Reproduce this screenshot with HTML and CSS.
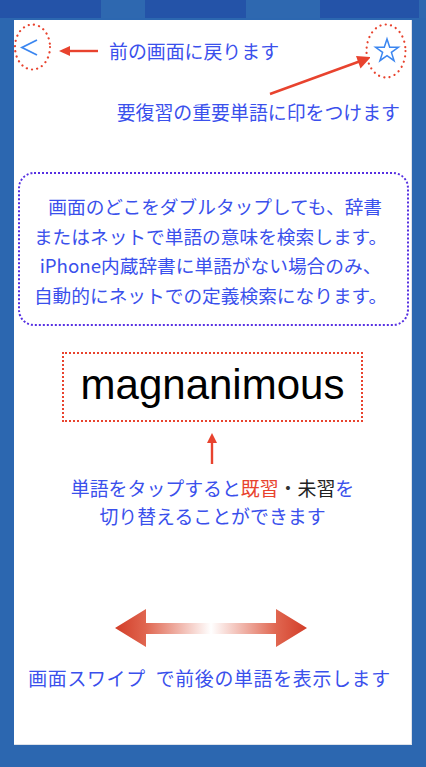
FILE: index.html
```
<!DOCTYPE html>
<html lang="ja">
<head>
<meta charset="utf-8">
<title>使い方</title>
<link rel="stylesheet" href="styles.css">
</head>
<body>
<div class="statusbar">
  <span class="seg dark w101"></span>
  <span class="seg light w44"></span>
  <span class="seg dark w101"></span>
  <span class="seg light w74"></span>
  <span class="seg dark w99"></span>
  <span class="seg light grow"></span>
</div>
<main class="panel">
  <section class="header">
    <div class="row1">
      <svg class="backbtn" width="40" height="56" viewBox="0 0 40 56">
        <ellipse cx="18.5" cy="24" rx="17.5" ry="22.5" fill="none" stroke="#e8432e" stroke-width="2.2" stroke-dasharray="0.1 5.2" stroke-linecap="round"/>
        <polyline points="23,17 8,24.5 23,32" fill="none" stroke="#3b86f0" stroke-width="1.8"/>
      </svg>
      <svg class="leftarrow" width="44" height="56" viewBox="0 0 44 56">
        <line x1="12" y1="28" x2="42" y2="28" stroke="#e8432e" stroke-width="2.4"/>
        <polygon points="3,28 14,23 14,33" fill="#e8432e"/>
      </svg>
      <p class="note note-back">前の画面に戻ります</p>
      <svg class="starbtn" width="44" height="56" viewBox="0 0 44 56">
        <ellipse cx="21" cy="28" rx="19.5" ry="26.5" fill="none" stroke="#e8432e" stroke-width="2.2" stroke-dasharray="0.1 5.3" stroke-linecap="round"/>
        <polygon points="22,16 24.7,24.3 33.4,24.3 26.4,29.4 29.1,37.7 22,32.6 14.9,37.7 17.6,29.4 10.6,24.3 19.3,24.3" fill="none" stroke="#3b86f0" stroke-width="1.5" stroke-linejoin="miter"/>
      </svg>
    </div>
    <p class="note note-star">要復習の重要単語に印をつけます</p>
    <svg class="diagarrow" width="120" height="70" viewBox="0 0 120 70">
      <line x1="20" y1="57" x2="112" y2="23.5" stroke="#e8432e" stroke-width="2.4"/>
      <polygon points="121,20 106,19 110.5,31.5" fill="#e8432e"/>
    </svg>
  </section>

  <section class="infobox">
    <p class="info">&ensp;画面のどこをダブルタップしても、辞書<br>またはネットで単語の意味を検索します。<br>iPhone内蔵辞書に単語がない場合のみ、<br>自動的にネットでの定義検索になります。</p>
  </section>

  <div class="wordbox">
    <span class="word">magnanimous</span>
  </div>

  <svg class="uparrow" width="12" height="32" viewBox="0 0 12 32">
    <polygon points="6,0 11,10 1,10" fill="#e8432e"/>
    <line x1="6" y1="8" x2="6" y2="31" stroke="#e8432e" stroke-width="2.4"/>
  </svg>

  <p class="note note-tap">単語をタップすると<span class="known">既習</span><span class="dot">・</span><span class="unknown">未習</span>を<br>切り替えることができます</p>

  <svg class="swipe" width="192" height="38" viewBox="0 0 192 38">
    <defs>
      <linearGradient id="g" x1="0" y1="0" x2="192" y2="0" gradientUnits="userSpaceOnUse">
        <stop offset="0" stop-color="#d23d28"/>
        <stop offset="0.16" stop-color="#e06650"/>
        <stop offset="0.5" stop-color="#ffffff"/>
        <stop offset="0.84" stop-color="#e06650"/>
        <stop offset="1" stop-color="#d23d28"/>
      </linearGradient>
    </defs>
    <polygon points="0,19 31,0 31,14 161,14 161,0 192,19 161,38 161,25 31,25 31,38" fill="url(#g)"/>
  </svg>

  <p class="note note-swipe">画面スワイプ&nbsp;&nbsp;で前後の単語を表示します</p>
</main>
</body>
</html>
```
FILE: styles.css
```
* { box-sizing: border-box; }
html, body { margin: 0; padding: 0; }
body {
  background: #2c67b0;
  width: 426px;
  height: 767px;
  overflow: hidden;
  font-family: "Noto Sans CJK JP", "Noto Sans", sans-serif;
}
.statusbar {
  display: flex;
  height: 20px;
  padding-bottom: 2px;
}
.seg { display: block; height: 18px; }
.dark { background: #2453a8; }
.light { background: #2e68b0; }
.w101 { width: 101px; }
.w44 { width: 44px; }
.w74 { width: 74px; }
.w99 { width: 99px; }
.grow { flex: 1; }

.panel {
  margin: 0 14px;
  width: 398px;
  height: 725px;
  background: #fff;
  border-right: 1px solid #dde2ea;
  border-bottom: 1px solid #dde2ea;
  display: flex;
  flex-direction: column;
}
.note {
  margin: 0;
  color: #3a50ec;
  font-size: 18.9px;
  line-height: 26px;
  white-space: nowrap;
}
.header {
  position: relative;
  padding-top: 3px;
}
.row1 {
  display: flex;
  align-items: center;
  height: 56px;
}
.backbtn { display: block; flex: none; }
.leftarrow { display: block; flex: none; margin-left: 2px; }
.note-back { margin-left: 9px; }
.starbtn { display: block; flex: none; margin-left: auto; margin-right: 2px; }
.note-star {
  margin-top: 20px;
  text-align: right;
  padding-right: 11px;
}
.diagarrow {
  position: absolute;
  left: 236px;
  top: 17px;
}
.infobox {
  margin: 47px 2px 0 4px;
  height: 154px;
  border: 2.4px dotted #5630e2;
  border-radius: 16px;
  padding: 17px 6px 0 0;
}
.info {
  margin: 0;
  color: #3a50ec;
  font-size: 18.7px;
  line-height: 29.7px;
  text-align: center;
  white-space: nowrap;
}
.wordbox {
  margin: 26px 0 0 48px;
  width: 301px;
  height: 70px;
  border: 2.4px dotted #e8432e;
  display: flex;
  align-items: center;
  justify-content: center;
}
.word {
  font-family: "Liberation Sans", Arial, sans-serif;
  font-size: 42px;
  color: #000;
  line-height: 1;
  padding-bottom: 4px;
}
.uparrow {
  display: block;
  margin: 11px 0 0 192px;
}
.note-tap {
  margin-top: 9px;
  text-align: center;
  line-height: 28px;
}
.known { color: #e8432e; }
.dot { color: #333; }
.unknown { color: #222; }
.swipe {
  display: block;
  margin: 79px 0 0 101px;
}
.note-swipe {
  margin-top: 18px;
  text-align: center;
  padding-right: 6px;
  letter-spacing: 0.7px;
}
```
